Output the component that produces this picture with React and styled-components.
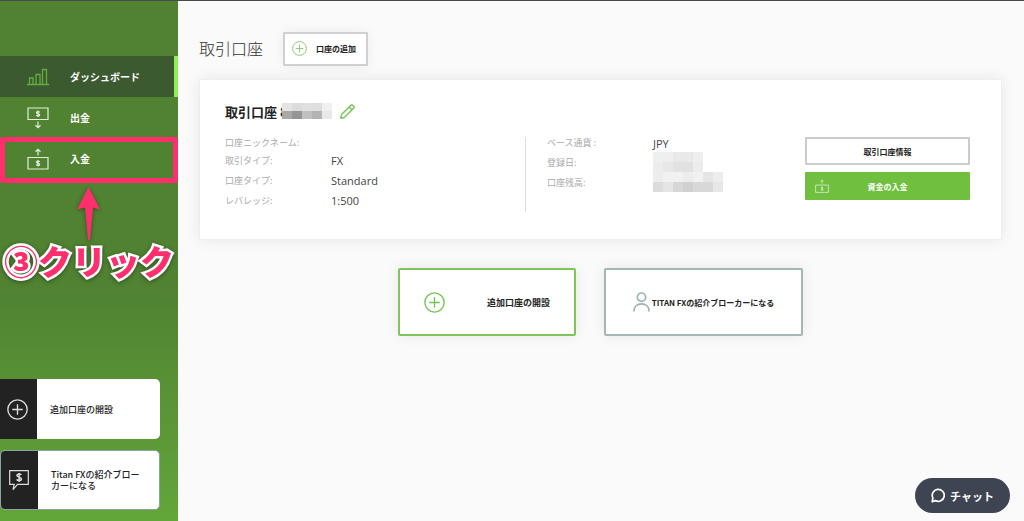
import styled, { createGlobalStyle } from "styled-components";

const GlobalStyle = createGlobalStyle`
  * {
    box-sizing: border-box;
  }
  body {
    margin: 0;
    background: #fafafa;
    color: #333;
    font-family: "Noto Sans CJK JP", "Open Sans", sans-serif;
    font-size: 9px;
  }
  button {
    font-family: inherit;
    cursor: pointer;
  }
  svg {
    flex-shrink: 0;
  }
`

const ChartIcon = () => (
  <svg width="22" height="18" viewBox="0 0 22 18" fill="none" stroke="#62ab3c" strokeWidth="1.3">
    <path d="M0 16.500h22M2.500 16.500V10h3.500v6.500M9 16.500V6.500h4v10M15.500 16.500V1.500h4v15" />
  </svg>
)

const WithdrawIcon = () => (
  <svg width="22" height="22" viewBox="0 0 22 22" fill="none" stroke="#e4eddd" strokeWidth="1.2">
    <path d="M1 1h20v11.500H1zM11 14.500v6M8.500 18.300l2.500 2.400 2.500-2.400" />
    <path d="M12.600 5.300c-.6-.9-3.100-.9-3.100.4s3.200.8 3.200 2.200-2.700 1.300-3.400.3M11 3.500v6.500" />
  </svg>
)

const DepositIcon = ({ width = 22, height = 22 }) => (
  <svg width={width} height={height} viewBox="0 0 22 22" fill="none" stroke="#e4eddd" strokeWidth="1.2">
    <path d="M1 9.500h20V21H1zM11 7.500v-6M8.500 3.700L11 1.300l2.500 2.400" />
    <path d="M12.600 13.800c-.6-.9-3.100-.9-3.100.4s3.200.8 3.200 2.200-2.700 1.300-3.400.3M11 12v6.500" />
  </svg>
)

const PlusIcon = ({ size = 20, color }) => (
  <svg width={size} height={size} viewBox="0 0 20 20" fill="none" stroke={color} strokeWidth="1.3">
    <circle cx="10" cy="10" r="9.200" />
    <path d="M10 5v10M5 10h10" />
  </svg>
)

const SpeechIcon = () => (
  <svg width="20" height="21" viewBox="0 0 20 21" fill="none" stroke="#ddd" strokeWidth="1.2">
    <path d="M.7.700h18.600v13.600H8.500L4 19.700l1.200-5.400H.7z" />
    <path d="M12.300 5c-.8-1.400-4.400-1.300-4.400.6s4.500 1.300 4.500 3.300-3.800 2-4.800.4M10.100 3v9" strokeWidth="1.500" />
  </svg>
)

const PencilIcon = () => (
  <svg width="15" height="15" viewBox="0 0 15 15" fill="none" stroke="#76c553" strokeWidth="1.400" strokeLinejoin="round">
    <path d="M.8 14.200l.7-3.600L11 1.200c.5-.5 1-.5 1.500 0l1.300 1.300c.5.500.5 1 0 1.500L4.400 13.500zM9.200 3l2.800 2.800" />
  </svg>
)

const PersonIcon = () => (
  <svg width="17" height="20" viewBox="0 0 17 20" fill="none" stroke="#9eb3b1" strokeWidth="1.700">
    <circle cx="8.500" cy="5.200" r="4.200" />
    <path d="M1 19.500v-.8c0-4 3-6.900 7.500-6.900s7.500 2.900 7.500 6.900v.8" />
  </svg>
)

const ChatIcon = () => (
  <svg width="14" height="15" viewBox="0 0 14 15" fill="none" stroke="#fff" strokeWidth="1.700" strokeLinejoin="round">
    <path d="M1.200 13.700l.7-3.600A6 6 0 1 1 4.300 12.600z" />
  </svg>
)

const ArrowMark = () => (
  <svg width="24" height="54" viewBox="0 0 24 54" fill="#ff2e6c">
    <path d="M11.500 0L23 22.500l-7-2L13 53h-2L8 20.500l-8 2z" />
  </svg>
)

const titleMask = [
  ["#e4e4e4", "#dcdcdc", "#e0e0e0", "#dedede", "#f0f0f0"],
  ["#a8a8a8", "#969696", "#c0c0c0", "#b4b4b4", "#e8e8e8"],
]

const dateMask = [
  ["#efefef", "#efefef", "#e9e9e9", "#e9e9e9", "#efefef"],
  ["#ececec", "#e7e7e7", "#e2e2e2", "#e1e1e1", "#ececec"],
]

const balanceMask = [
  ["#ededed", "#f1f1f1", "#f1f1f1", "#ececec", "#f1f1f1", "#e5e5e5", "#ececec"],
  ["#dcdcdc", "#e5e5e5", "#d7d7d7", "#d0d0d0", "#d8d8d8", "#d8d8d8", "#e7e7e7"],
]

const Mask = ({ rows, cellHeight, className }) => (
  <StyledMask className={className} $columns={rows[0].length} $cellHeight={cellHeight}>
    {rows.flat().map((color, i) => (
      <span key={i} style={{ background: color }} />
    ))}
  </StyledMask>
)

export default function App() {
  return (
    <Page>
      <GlobalStyle />
      <Sidebar>
        <Nav>
          <NavItem href="#dashboard" $active>
            <ChartIcon />
            ダッシュボード
          </NavItem>
          <NavItem href="#withdraw">
            <WithdrawIcon />
            出金
          </NavItem>
          <NavItem href="#deposit">
            <DepositIcon />
            入金
            <Highlight />
            <Hint>
              <ArrowMark />
              <HintText>③クリック</HintText>
            </Hint>
          </NavItem>
        </Nav>
        <SideLinks>
          <SideLink href="#open">
            <SideLinkIcon>
              <PlusIcon size={21} color="#ddd" />
            </SideLinkIcon>
            <SideLinkText>追加口座の開設</SideLinkText>
          </SideLink>
          <SideLink href="#broker" $outlined>
            <SideLinkIcon>
              <SpeechIcon />
            </SideLinkIcon>
            <SideLinkText>Titan FXの紹介ブローカーになる</SideLinkText>
          </SideLink>
        </SideLinks>
      </Sidebar>

      <Main>
        <Header>
          <Title>取引口座</Title>
          <AddButton type="button">
            <PlusIcon size={15} color="#8acb6c" />
            口座の追加
          </AddButton>
        </Header>

        <Account>
          <AccountTitle>
            取引口座 8
            <TitleMask rows={titleMask} cellHeight={8} />
            <EditButton type="button" aria-label="edit">
              <PencilIcon />
            </EditButton>
          </AccountTitle>
          <AccountBody>
            <Details>
              <dt>口座ニックネーム:</dt>
              <dd />
              <dt>取引タイプ:</dt>
              <dd>FX</dd>
              <dt>口座タイプ:</dt>
              <dd>Standard</dd>
              <dt>レバレッジ:</dt>
              <dd>1:500</dd>
            </Details>
            <Details $divided>
              <dt>ベース通貨 :</dt>
              <dd>JPY</dd>
              <dt>登録日:</dt>
              <dd>
                <ValueMask rows={dateMask} cellHeight={10} />
              </dd>
              <dt>口座残高:</dt>
              <dd>
                <ValueMask rows={balanceMask} cellHeight={10} />
              </dd>
            </Details>
            <Actions>
              <ActionButton type="button">取引口座情報</ActionButton>
              <ActionButton type="button" $primary>
                <DepositIcon width={14} height={14} />
                <span>資金の入金</span>
              </ActionButton>
            </Actions>
          </AccountBody>
        </Account>

        <Promos>
          <Promo type="button" $color="#7dc75a">
            <PlusIcon size={21} color="#76c553" />
            <span>追加口座の開設</span>
          </Promo>
          <Promo type="button" $color="#a4b7b4" $wide>
            <PersonIcon />
            TITAN FXの紹介ブローカーになる
          </Promo>
        </Promos>
      </Main>

      <ChatButton type="button">
        <ChatIcon />
        チャット
      </ChatButton>
    </Page>
  )
}

const Page = styled.div`
  display: flex;
  min-height: 100vh;
  border-top: 1px solid #484b48;
`

const Sidebar = styled.aside`
  display: flex;
  flex-direction: column;
  justify-content: space-between;
  flex: 0 0 178px;
  padding: 55px 0 11px;
  background: linear-gradient(#508232 55%, #62a63a);
`

const Nav = styled.nav`
  display: flex;
  flex-direction: column;
`

const NavItem = styled.a`
  position: relative;
  display: flex;
  align-items: center;
  gap: 21px;
  height: 41px;
  padding-left: 27px;
  background: ${({ $active }) => ($active ? "#3c5a30" : "transparent")};
  border-right: 4px solid ${({ $active }) => ($active ? "#8df058" : "transparent")};
  color: #fff;
  font-size: 10px;
  font-weight: 700;
  text-decoration: none;
`

const Highlight = styled.span`
  position: absolute;
  inset: -1px -4px -4px 0;
  border: 5px solid #ff2e6c;
  border-radius: 3px;
`

const Hint = styled.span`
  position: absolute;
  top: 49px;
  left: 4px;
  display: flex;
  flex-direction: column;
  align-items: center;
  filter: drop-shadow(0 1px 2px rgba(0, 0, 0, .4));
`

const HintText = styled.span`
  color: #ff2e6c;
  font-size: 34px;
  font-weight: 900;
  line-height: 40px;
  white-space: nowrap;
  -webkit-text-stroke: 5px #fff;
  paint-order: stroke fill;
`

const SideLinks = styled.div`
  display: flex;
  flex-direction: column;
  gap: 11px;
  padding-right: 18px;
`

const SideLink = styled.a`
  display: flex;
  height: 60px;
  overflow: hidden;
  background: #fff;
  border: ${({ $outlined }) => ($outlined ? "1px solid #8aa4a0" : "none")};
  border-radius: ${({ $outlined }) => ($outlined ? "5px" : "0 5px 5px 0")};
  color: #222;
  font-weight: 500;
  line-height: 11px;
  text-decoration: none;
`

const SideLinkIcon = styled.span`
  display: flex;
  align-items: center;
  justify-content: center;
  flex: 0 0 37px;
  padding-right: 2px;
  background: #222;
`

const SideLinkText = styled.span`
  align-self: center;
  padding: 0 16px 0 13px;
`

const Main = styled.main`
  flex: 1;
  padding: 31px 22px 0 21px;
`

const Header = styled.header`
  display: flex;
  align-items: center;
  gap: 20px;
`

const Title = styled.h1`
  margin: 0;
  padding-bottom: 3px;
  font-size: 16px;
  font-weight: 300;
`

const AddButton = styled.button`
  display: flex;
  align-items: center;
  gap: 9px;
  height: 34px;
  padding: 0 10px 2px 7px;
  background: #fff;
  border: 2px solid #d0d0d0;
  border-radius: 1px;
  box-shadow: 0 0 12px rgba(0, 0, 0, .06);
  color: #222;
  font-size: 8px;
  font-weight: 700;
`

const Account = styled.section`
  margin-top: 13px;
  padding: 21px 31px 24px 25px;
  background: #fff;
  border: 1px solid #eee;
  box-shadow: 0 0 14px rgba(0, 0, 0, .08);
`

const AccountTitle = styled.h2`
  display: flex;
  align-items: center;
  height: 20px;
  margin: 0;
  color: #222;
  font-size: 13px;
  font-weight: 700;
`

const EditButton = styled.button`
  display: flex;
  margin-left: 8px;
  padding: 0;
  background: none;
  border: none;
`

const StyledMask = styled.span`
  display: grid;
  grid-template-columns: repeat(${({ $columns }) => $columns}, 10px);
  grid-auto-rows: ${({ $cellHeight }) => $cellHeight}px;
  width: max-content;
`

const TitleMask = styled(Mask)`
  margin-left: -6px;
`

const ValueMask = styled(Mask)`
  margin-top: -6px;
`

const AccountBody = styled.div`
  display: flex;
  align-items: flex-start;
  margin-top: 16px;
`

const Details = styled.dl`
  display: grid;
  grid-template-columns: 106px 1fr;
  grid-template-rows: ${({ $divided }) => ($divided ? "20px" : "18px")};
  grid-auto-rows: 20px;
  flex: ${({ $divided }) => ($divided ? "0 0 280px" : "1")};
  min-height: 75px;
  margin: 0;
  padding-left: ${({ $divided }) => ($divided ? "21px" : "0")};
  border-left: ${({ $divided }) => ($divided ? "1px solid #ddd" : "none")};
  color: #aaa;
  font-weight: 400;
  line-height: 11px;
  dd {
    margin: 0;
    padding-top: ${({ $divided }) => ($divided ? "1px" : "0")};
    color: #444;
    font-family: "Open Sans", sans-serif;
    font-size: 11px;
  }
`

const Actions = styled.div`
  display: flex;
  flex-direction: column;
  flex: 0 0 165px;
  gap: 7px;
`

const ActionButton = styled.button`
  display: flex;
  align-items: center;
  justify-content: center;
  height: 28px;
  padding: 0 10px;
  background: ${({ $primary }) => ($primary ? "#70bf3f" : "#fff")};
  border: ${({ $primary }) => ($primary ? "none" : "2px solid #ccc")};
  border-radius: 1px;
  color: ${({ $primary }) => ($primary ? "#fff" : "#222")};
  font-size: 8px;
  font-weight: 700;
  span {
    flex: 1;
    padding-right: 14px;
    text-align: center;
  }
`

const Promos = styled.div`
  display: flex;
  justify-content: center;
  gap: 28px;
  margin-top: 28px;
`

const Promo = styled.button`
  display: flex;
  align-items: center;
  justify-content: ${({ $wide }) => ($wide ? "center" : "space-between")};
  gap: 2px;
  width: ${({ $wide }) => ($wide ? "199px" : "178px")};
  height: 68px;
  padding: 0 24px;
  background: #fff;
  border: 2px solid ${({ $color }) => $color};
  border-radius: 2px;
  box-shadow: 0 0 14px rgba(0, 0, 0, .08);
  color: #222;
  font-size: ${({ $wide }) => ($wide ? "8px" : "9px")};
  font-weight: 700;
  white-space: nowrap;
`

const ChatButton = styled.button`
  position: fixed;
  right: 14px;
  bottom: 8px;
  display: flex;
  align-items: center;
  gap: 5px;
  height: 35px;
  padding: 0 16px;
  background: #3e4452;
  border: none;
  border-radius: 18px;
  color: #fff;
  font-size: 11px;
  font-weight: 700;
`
